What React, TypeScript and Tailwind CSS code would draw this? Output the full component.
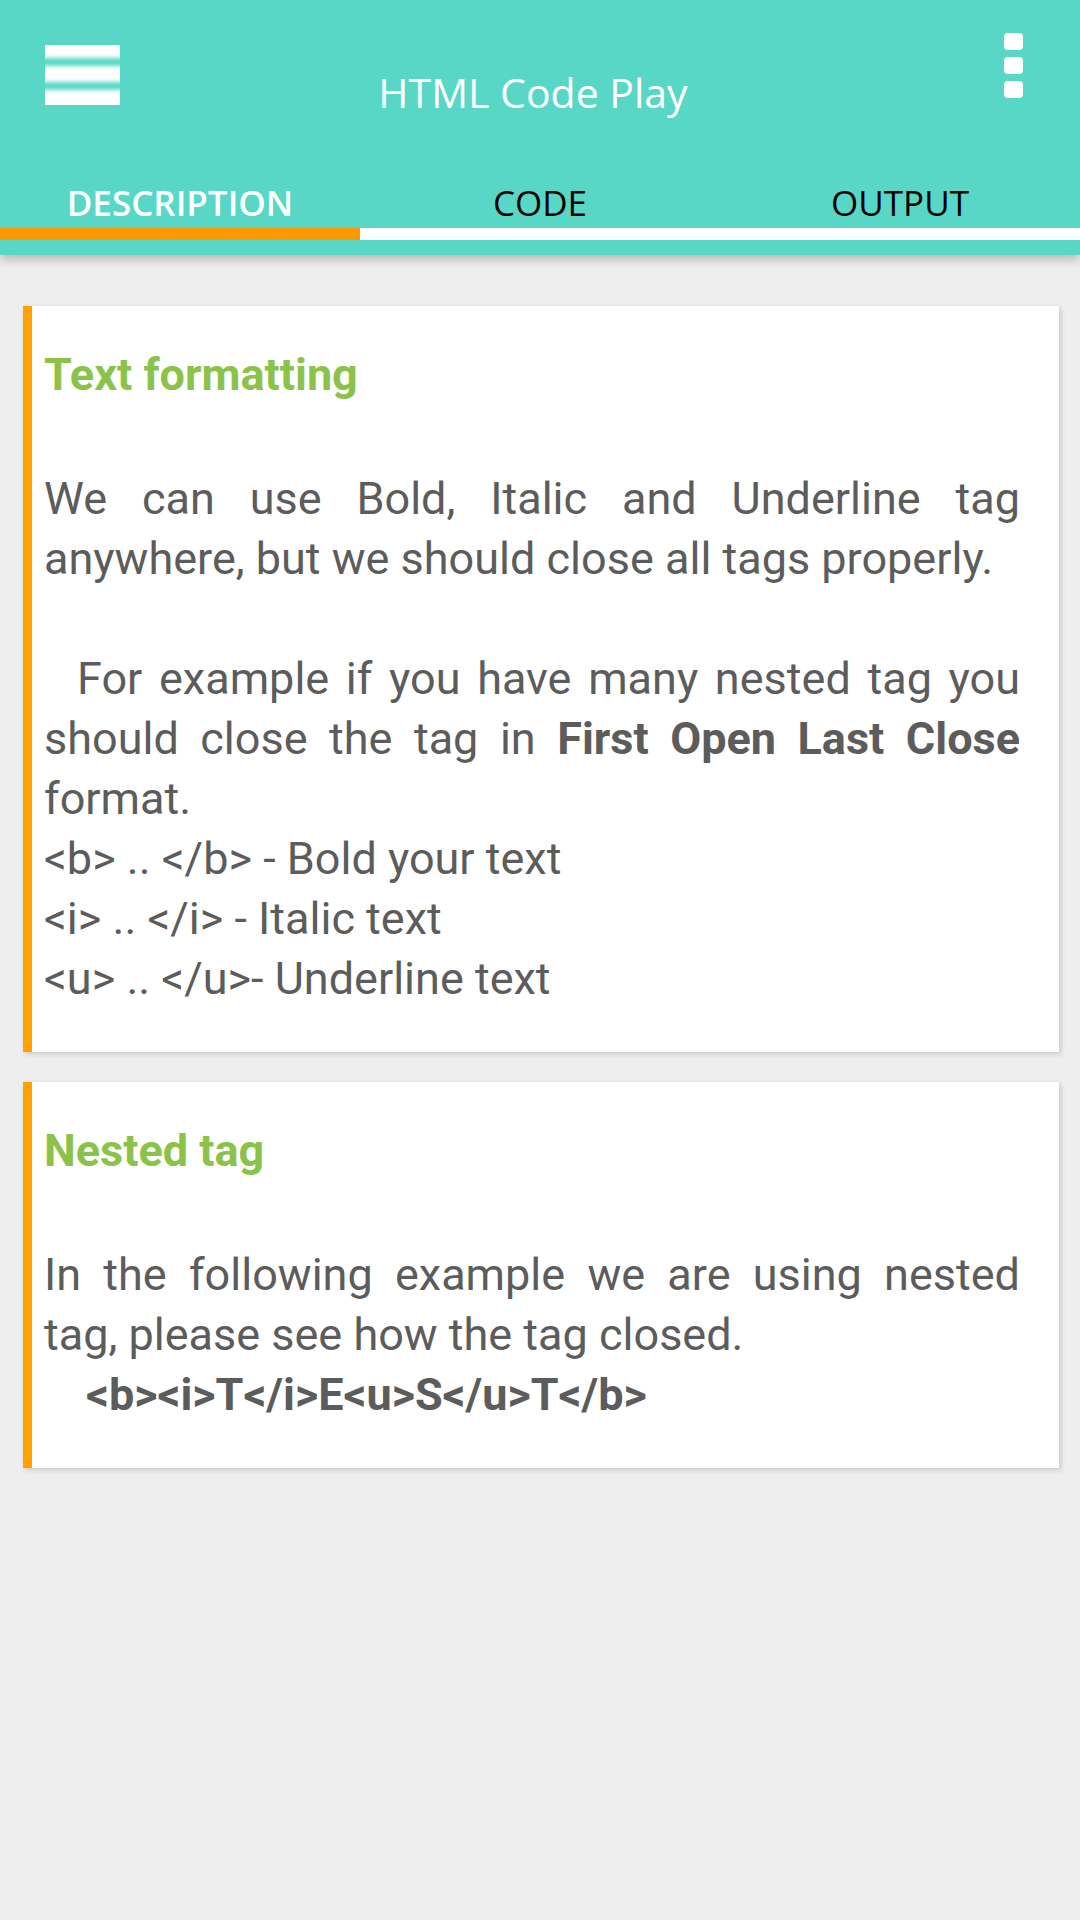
// App.tsx - HTML Code Play description screen
import React from 'react';

const Hamburger: React.FC = () => (
  <div className="mt-[45px] flex h-[60px] w-[75px] flex-col overflow-hidden bg-white">
    {/* 条之间的模糊间隙 */}
    <span className="mt-[13px] -mx-[8px] block h-[8px] bg-[#58d7c7] blur-[2px]"></span>
    <span className="mt-[16px] -mx-[8px] block h-[8px] bg-[#58d7c7] blur-[2px]"></span>
  </div>
);

const Kebab: React.FC = () => (
  <div className="flex flex-col gap-[7px] pt-[33px]">
    <span className="block h-[17px] w-[19px] rounded-[4px] bg-white"></span>
    <span className="block h-[17px] w-[19px] rounded-[4px] bg-white"></span>
    <span className="block h-[17px] w-[19px] rounded-[4px] bg-white"></span>
  </div>
);

interface CardProps {
  title: string;
  children: React.ReactNode;
}

const Card: React.FC<CardProps> = ({ title, children }) => (
  <div className="w-[1036px] border-l-[9px] border-[#ffa200] bg-white pt-[39px] pr-[39px] pb-[43px] pl-[12px] shadow-[2px_2px_5px_rgba(0,0,0,0.16)]">
    <h3 className="mb-[64px] text-[45px] leading-[60px] font-bold text-[#8bc34a]">{title}</h3>
    <div className="text-[45px] leading-[60px] text-[#5c5c5c]">{children}</div>
  </div>
);

export default function App() {
  return (
    <div className="flex h-[1920px] w-[1080px] flex-col bg-[#eeeeee] font-['Roboto',sans-serif]">
      {/* 顶部栏 */}
      <header className="relative z-10 bg-[#58d7c7] font-['Open_Sans','Noto_Sans',sans-serif] shadow-[0_5px_10px_rgba(0,0,0,0.22)]">
        <div className="flex h-[179px] items-start pl-[45px] pr-[57px]">
          <Hamburger />
          <div className="flex-1 pt-[64px] pr-[58px] text-center text-[41px] leading-[56px] text-white">
            HTML Code Play
          </div>
          <Kebab />
        </div>

        {/* 标签页 */}
        <div className="grid h-[49px] grid-cols-3 text-[35px] leading-[48px]">
          <div className="text-center font-semibold text-white">DESCRIPTION</div>
          <div className="text-center font-medium text-black">CODE</div>
          <div className="text-center font-medium text-black">OUTPUT</div>
        </div>
        <div className="flex h-[12px]">
          <div className="w-[360px] bg-[#ff9800]"></div>
          <div className="flex-1 bg-white"></div>
        </div>
        <div className="h-[15px]"></div>
      </header>

      {/* 内容 */}
      <main className="flex flex-col gap-[30px] pt-[51px] pl-[23px]">
        <Card title="Text formatting">
          <p className="text-justify">
            We can use Bold, Italic and Underline tag anywhere, but we should close all tags properly.
          </p>
          <div className="h-[60px]"></div>
          <p className="indent-[33px] text-justify">
            For example if you have many nested tag you should close the tag in{' '}
            <b className="font-bold">First Open Last Close</b> format.
          </p>
          <p>&lt;b&gt; .. &lt;/b&gt; - Bold your text</p>
          <p>&lt;i&gt; .. &lt;/i&gt; - Italic text</p>
          <p>&lt;u&gt; .. &lt;/u&gt;- Underline text</p>
        </Card>

        <Card title="Nested tag">
          <p className="text-justify">
            In the following example we are using nested tag, please see how the tag closed.
          </p>
          <p className="pl-[42px] font-bold">&lt;b&gt;&lt;i&gt;T&lt;/i&gt;E&lt;u&gt;S&lt;/u&gt;T&lt;/b&gt;</p>
        </Card>
      </main>
    </div>
  );
}
